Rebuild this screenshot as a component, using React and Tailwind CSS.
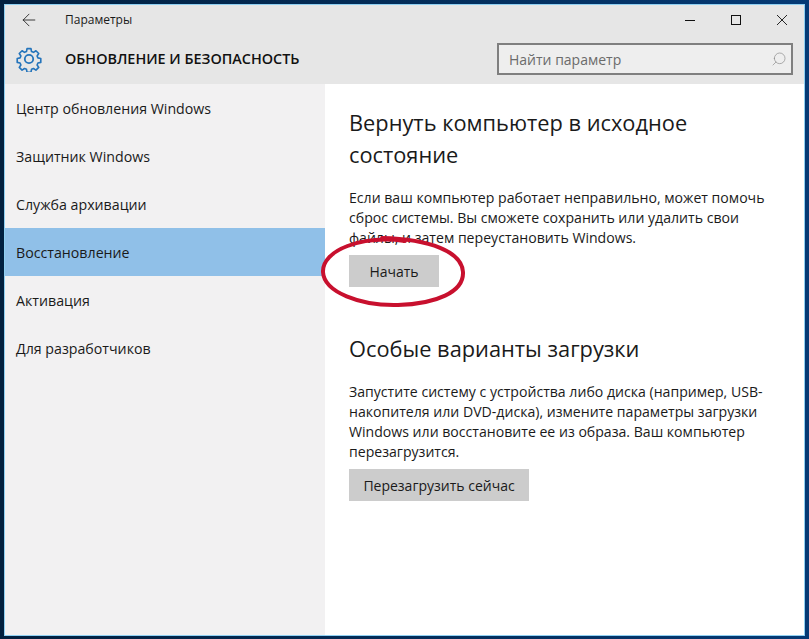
import { ArrowLeft, Search } from 'lucide-react';

const navItems = [
  'Центр обновления Windows',
  'Защитник Windows',
  'Служба архивации',
  'Восстановление',
  'Активация',
  'Для разработчиков',
];

function Gear() {
  return (
    <svg width="26" height="26" viewBox="0 0 26 26" fill="none" stroke="#2474bb" strokeWidth="1.8" strokeLinejoin="round">
      <path d="M10.8 1.5h4.4l.6 3.2 2.2.9 2.7-1.8 3.1 3.1-1.8 2.7.9 2.2 3.2.6v4.4l-3.2.6-.9 2.2 1.8 2.7-3.1 3.1-2.7-1.8-2.2.9-.6 3.2h-4.4l-.6-3.2-2.2-.9-2.7 1.8-3.1-3.1 1.8-2.7-.9-2.2-3.2-.6v-4.4l3.2-.6.9-2.2-1.8-2.7 3.1-3.1 2.7 1.8 2.2-.9z" transform="translate(1.3 1.3) scale(0.9)" />
      <circle cx="13" cy="13" r="4.2" />
    </svg>
  );
}

function WindowControls() {
  return (
    <div className="ml-auto mr-[17px] flex items-center gap-[36px]">
      <svg width="10" height="10" viewBox="0 0 10 10" stroke="#111" strokeWidth="1"><path d="M0 5.5h10" /></svg>
      <svg width="10" height="10" viewBox="0 0 10 10" fill="none" stroke="#111" strokeWidth="1"><rect x="0.5" y="0.5" width="9" height="9" /></svg>
      <svg width="10" height="10" viewBox="0 0 10 10" stroke="#111" strokeWidth="0.9"><path d="M0 0l10 10M10 0L0 10" /></svg>
    </div>
  );
}

export default function App() {
  return (
    <div className="w-[809px] h-[639px] p-[4px] pb-[3px] bg-gradient-to-r from-[#02203f] to-[#053a75] font-['Open_Sans',sans-serif] overflow-hidden">
      <div className="relative h-full flex flex-col border border-[#8fd0f2] bg-white">
        <header className="h-[79px] shrink-0 bg-[#e6e6e6] flex flex-col">
          <div className="h-[30px] flex items-center text-[#1a1a1a]">
            <ArrowLeft size={20} strokeWidth={1} className="ml-[14px]" />
            <span className="ml-[26px] text-[12px] leading-none">Параметры</span>
            <WindowControls />
          </div>
          <div className="flex items-center h-[49px] pb-[1px]">
            <div className="ml-[11px]"><Gear /></div>
            <h1 className="ml-[23px] text-[14.4px] font-semibold text-[#111] leading-none">ОБНОВЛЕНИЕ И БЕЗОПАСНОСТЬ</h1>
            <div className="ml-auto mr-[11px] w-[296px] h-[32px] border-[2px] border-[#7f7f7f] bg-[#eeeeee] flex items-center pl-[10px] pr-[4px]">
              <span className="text-[14px] text-[#6b6b6b]">Найти параметр</span>
              <Search size={16} strokeWidth={1} className="ml-auto text-[#888] -scale-x-100" />
            </div>
          </div>
        </header>

        <div className="flex-1 flex min-h-0">
          <nav className="w-[320px] shrink-0 bg-[#f2f1f2]">
            {navItems.map((item) => (
              <div
                key={item}
                className={`h-[48px] flex items-center pl-[11px] pt-[2px] text-[14.2px] text-[#1a1a1a] ${item === 'Восстановление' ? 'bg-[#90c0e8]' : ''}`}
              >
                {item}
              </div>
            ))}
          </nav>

          <main className="flex-1 pl-[24px] pr-[16px] pt-[23px] text-[#1a1a1a]">
            <h2 className="text-[21.8px] leading-[32px] w-[400px]">Вернуть компьютер в исходное состояние</h2>
            <p className="mt-[17px] text-[14.1px] leading-[20px] w-[440px]">
              Если ваш компьютер работает неправильно, может помочь сброс системы. Вы сможете сохранить или удалить свои файлы, и затем переустановить Windows.
            </p>
            <button className="mt-[7px] w-[90px] h-[32px] bg-[#cccccc] text-[14px] text-[#1a1a1a]">Начать</button>

            <h2 className="mt-[46px] text-[21.8px] leading-[32px]">Особые варианты загрузки</h2>
            <p className="mt-[17px] text-[14.1px] leading-[20px] w-[440px]">
              Запустите систему с устройства либо диска (например, USB-накопителя или DVD-диска), измените параметры загрузки Windows или восстановите ее из образа. Ваш компьютер перезагрузится.
            </p>
            <button className="mt-[7px] w-[180px] h-[32px] bg-[#cccccc] text-[14px] text-[#1a1a1a]">Перезагрузить сейчас</button>
          </main>
        </div>

        {/* красный овал поверх кнопки, от руки */}
        <svg className="absolute left-[311px] top-[226px] pointer-events-none" width="156" height="82" viewBox="316 231 156 82" fill="none">
          <path
            d="M405 241C362 235 322 250 323 272C324 292 360 306 398 305C436 304 464 292 463 272C462 252 430 239 382 238"
            stroke="#c8102e"
            strokeWidth="4"
            strokeLinecap="round"
          />
        </svg>
      </div>
    </div>
  );
}
